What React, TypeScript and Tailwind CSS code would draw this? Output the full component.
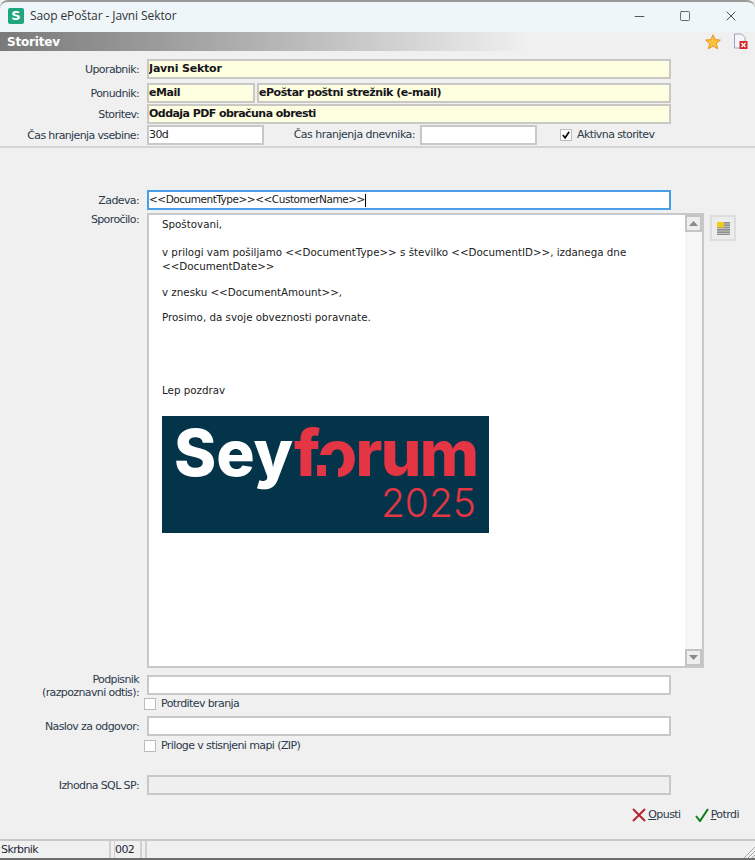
import React from "react";
import { Minus, Square, X } from "lucide-react";

const FONT = '"DejaVu Sans", Verdana, sans-serif';

function Label({ children }: { children: React.ReactNode }) {
  return <div className="w-[139px] mr-[1px] shrink-0 text-right text-[#2c3a4a] tracking-[-0.62px] leading-[13px]">{children}</div>;
}

function Ro({ className, children }: { className: string; children: React.ReactNode }) {
  return (
    <div className={`h-[20px] border-2 border-[#c8c8c4] bg-[#fefee0] font-bold text-[#15151a] text-[11px] leading-[16px] whitespace-nowrap overflow-hidden ${className}`}>
      {children}
    </div>
  );
}

function Input({ className, children }: { className: string; children?: React.ReactNode }) {
  return (
    <div className={`h-[20px] border-2 border-[#c8c8c8] bg-white leading-[16px] text-[#222] tracking-[-0.6px] ${className}`}>{children}</div>
  );
}

function Check({ checked, label }: { checked?: boolean; label: string }) {
  return (
    <div className="flex items-center gap-[5px]">
      <div className="w-[12px] h-[12px] border border-[#bcbcbc] bg-white flex items-center justify-center">
        {checked && (
          <svg viewBox="0 0 11 11" className="w-[10px] h-[10px]">
            <path d="M2 5.5 L4.5 8.5 L9 2" fill="none" stroke="#111" strokeWidth="1.9" />
          </svg>
        )}
      </div>
      <span className="text-[#2c3a4a] tracking-[-0.6px]">{label}</span>
    </div>
  );
}

function ScrollBtn({ up }: { up?: boolean }) {
  return (
    <div className="w-[17px] h-[17px] bg-[#eeeeee] border-2 border-[#c4c4c4] flex items-center justify-center">
      <svg viewBox="0 0 9 5" className="w-[9px] h-[5px]">
        <path d={up ? "M0 5 L9 5 L4.5 0 Z" : "M0 0 L9 0 L4.5 5 Z"} fill="#8a8a8a" />
      </svg>
    </div>
  );
}

function Logo() {
  return (
    <svg viewBox="0 0 327 117" className="block w-[327px] h-[117px]">
      <rect width="327" height="117" fill="#03344a" />
      <text x="12" y="60" fontFamily="Inter, sans-serif" fontWeight="800" fontSize="64" letterSpacing="0" fill="#ffffff">Sey</text>
      <text x="132" y="60" fontFamily="Inter, sans-serif" fontWeight="800" fontSize="64" letterSpacing="-1.6" fill="#e33544">forum</text>
      <rect x="155" y="39" width="21" height="24" fill="#03344a" />
      <rect x="155" y="49" width="9" height="11" fill="#e33544" />
      <text x="314" y="101" textAnchor="end" fontFamily="Inter, sans-serif" fontWeight="300" fontSize="39" fill="#e33544">2025</text>
    </svg>
  );
}

export default function App() {
  return (
    <div className="w-[755px] h-[860px] bg-[#f0f0f0] flex flex-col overflow-hidden text-[11px]" style={{ fontFamily: FONT }}>
      {/* Title bar */}
      <div className="h-[32px] shrink-0 bg-[#eef6fa] border-t-2 border-[#9a9a9a] rounded-t-[8px] flex items-center pl-[8px] pb-[2px]">
        <div className="w-[16px] h-[16px] rounded-[2px] bg-[#1fa67f] text-white font-bold text-[13px] leading-[16px] text-center">S</div>
        <span className="ml-[6px] text-[12px] text-[#333] tracking-[-0.1px]" style={{ fontFamily: '"Open Sans", sans-serif' }}>Saop ePoštar - Javni Sektor</span>
        <div className="ml-auto flex items-center text-[#222]">
          <Minus size={15} strokeWidth={1.2} className="mr-[32px]" />
          <Square size={12} strokeWidth={1.3} className="mr-[32px]" />
          <X size={16} strokeWidth={1.2} className="mr-[16px]" />
        </div>
      </div>

      {/* Section header */}
      <div className="h-[19px] shrink-0 bg-gradient-to-r from-[#7a7a7a] to-[#f0f0f0] to-[70%] flex items-center pl-[7px] pr-[7px]">
        <span className="font-bold text-white text-[12px] tracking-[-0.2px]">Storitev</span>
        <div className="ml-auto flex items-center gap-[12px]">
          <svg viewBox="0 0 16 16" className="w-[16px] h-[16px]">
            <path d="M8 .8 L10.1 5.6 L15.4 6.1 L11.4 9.6 L12.6 14.8 L8 12.1 L3.4 14.8 L4.6 9.6 L.6 6.1 L5.9 5.6 Z" fill="#fbc23c" stroke="#e8912a" strokeWidth="1" />
          </svg>
          <svg viewBox="0 0 15 16" className="w-[15px] h-[16px] -mt-[2px]">
            <path d="M1.5 1 H8.5 L12 4.5 V15 H1.5 Z" fill="#f4f6fb" stroke="#9aa6bd" />
            <rect x="6.5" y="8" width="8" height="8" fill="#d8262a" />
            <path d="M8.5 10 L12.5 14 M12.5 10 L8.5 14" stroke="#fff" strokeWidth="1.4" />
          </svg>
        </div>
      </div>

      {/* Top panel */}
      <div className="h-[97px] shrink-0 border-b-2 border-[#d4d4d4] pt-[8px] flex flex-col">
        <div className="flex items-center gap-[7px]">
          <Label>Uporabnik:</Label>
          <Ro className="w-[524px] tracking-[-0.2px]">Javni Sektor</Ro>
        </div>
        <div className="flex items-center gap-[7px] mt-[4px]">
          <Label>Ponudnik:</Label>
          <Ro className="w-[108px] tracking-[-0.45px]">eMail</Ro>
          <Ro className="w-[414px] -ml-[5px] tracking-[-0.45px]">ePoštar poštni strežnik (e-mail)</Ro>
        </div>
        <div className="flex items-center gap-[7px] mt-[1px]">
          <Label>Storitev:</Label>
          <Ro className="w-[524px] tracking-[-0.55px]">Oddaja PDF obračuna obresti</Ro>
        </div>
        <div className="flex items-center gap-[7px] mt-[1px]">
          <Label>Čas hranjenja vsebine:</Label>
          <Input className="w-[117px]">30d</Input>
          <div className="w-[144px] shrink-0 text-right text-[#2c3a4a] tracking-[-0.5px]">Čas hranjenja dnevnika:</div>
          <Input className="w-[117px] -ml-[2px]" />
          <div className="ml-[16px]"><Check checked label="Aktivna storitev" /></div>
        </div>
      </div>

      {/* Main form */}
      <div className="flex-1 flex flex-col pt-[42px] min-h-0">
        <div className="flex items-center gap-[7px]">
          <Label>Zadeva:</Label>
          <div className="w-[524px] h-[20px] border-2 border-[#4a9ee8] bg-white text-[10.5px] text-[#222] tracking-[-0.47px] flex items-center">
            &lt;&lt;DocumentType&gt;&gt;&lt;&lt;CustomerName&gt;&gt;<span className="w-px h-[13px] bg-black" />
          </div>
        </div>

        <div className="flex items-start gap-[7px] mt-[3px]">
          <Label>Sporočilo:</Label>
          <div className="w-[557px] h-[455px] border-2 border-[#c8c8c8] bg-white flex">
            <div className="flex-1 pl-[13px] pt-[1px] text-[10.3px] leading-[14px] text-[#222]">
              <p className="mt-[1px]">Spoštovani,</p>
              <p className="mt-[14px] w-[480px]">v prilogi vam pošiljamo &lt;&lt;DocumentType&gt;&gt; s številko &lt;&lt;DocumentID&gt;&gt;, izdanega dne &lt;&lt;DocumentDate&gt;&gt;</p>
              <p className="mt-[12px]">v znesku &lt;&lt;DocumentAmount&gt;&gt;,</p>
              <p className="mt-[11px]">Prosimo, da svoje obveznosti poravnate.</p>
              <p className="mt-[59px]">Lep pozdrav</p>
              <div className="mt-[19px]"><Logo /></div>
            </div>
            <div className="w-[17px] flex flex-col justify-between bg-[#f6f6f6]">
              <ScrollBtn up />
              <ScrollBtn />
            </div>
          </div>
          <div className="w-[26px] h-[26px] -ml-[1px] bg-[#ececec] border-2 border-[#dddddd] flex items-center justify-center mt-[2px]">
            <svg viewBox="0 0 13 13" className="w-[13px] h-[13px]">
              <rect width="13" height="13" fill="#8f8f8f" />
              <path d="M0 6.5 H13 M0 9 H13 M0 11.5 H13 M7 2 H13 M7 4.5 H13" stroke="#d0d0d0" strokeWidth="0.8" />
              <rect width="7" height="5.5" fill="#f0cc20" />
            </svg>
          </div>
        </div>

        <div className="flex items-start gap-[7px] mt-[7px] h-[20px]">
          <Label>
            <div className="-mt-[2px]">Podpisnik<br />(razpoznavni odtis):</div>
          </Label>
          <Input className="w-[524px]" />
        </div>
        <div className="pl-[144px] mt-[2px] h-[14px] flex items-center">
          <Check label="Potrditev branja" />
        </div>
        <div className="flex items-center gap-[7px] mt-[5px]">
          <Label>Naslov za odgovor:</Label>
          <Input className="w-[524px]" />
        </div>
        <div className="pl-[144px] mt-[3px] h-[14px] flex items-center">
          <Check label="Priloge v stisnjeni mapi (ZIP)" />
        </div>
        <div className="flex items-center gap-[7px] mt-[22px]">
          <Label>Izhodna SQL SP:</Label>
          <div className="w-[524px] h-[20px] border-2 border-[#c8c8c8] bg-[#efefef]" />
        </div>

        <div className="flex items-center justify-end mt-[12px] pr-[16px] gap-[14px] text-[#2c3a4a] tracking-[-0.55px]">
          <div className="flex items-center gap-[2px]">
            <svg viewBox="0 0 14 14" className="w-[14px] h-[14px]">
              <path d="M1 1 L13 13 M13 1 L1 13" stroke="#b5222a" strokeWidth="1.9" />
            </svg>
            <span><span className="underline">O</span>pusti</span>
          </div>
          <div className="flex items-center gap-[2px]">
            <svg viewBox="0 0 14 14" className="w-[14px] h-[14px]">
              <path d="M1 8 L5 13 L13 1" fill="none" stroke="#0f7a18" strokeWidth="2" />
            </svg>
            <span><span className="underline">P</span>otrdi</span>
          </div>
        </div>
      </div>

      {/* Status bar */}
      <div className="h-[21px] shrink-0 border-t-2 border-[#c8c8c8] border-b-2 border-b-[#6e6e6e] flex gap-[3px] relative text-[#1f2a38] tracking-[-0.6px] leading-[17px]">
        <div className="w-[111px] pl-[1px] border-r-2 border-[#d0d0d0]">Skrbnik</div>
        <div className="w-[28px] border-l border-r-2 border-[#d0d0d0]">002</div>
        <div className="flex-1 border-l-2 border-[#d0d0d0]" />
        <svg viewBox="0 0 12 12" className="absolute right-0 bottom-0 w-[12px] h-[12px]">
          <path d="M12 1 L1 12 M12 5 L5 12 M12 9 L9 12" stroke="#a8a8a8" strokeWidth="1" />
        </svg>
      </div>
    </div>
  );
}
